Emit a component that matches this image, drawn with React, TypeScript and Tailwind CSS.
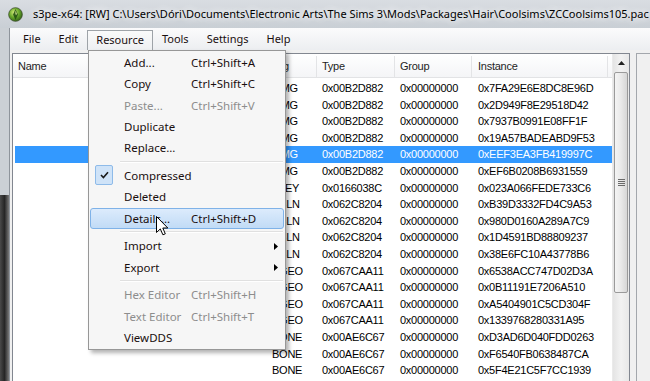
import React from 'react';

// ── Data ──────────────────────────────────────────────────────────────────────

const ROWS: [string, string, string][] = [
  ['_IMG', '0x00B2D882', '0x7FA29E6E8DC8E96D'],
  ['_IMG', '0x00B2D882', '0x2D949F8E29518D42'],
  ['_IMG', '0x00B2D882', '0x7937B0991E08FF1F'],
  ['_IMG', '0x00B2D882', '0x19A57BADEABD9F53'],
  ['_IMG', '0x00B2D882', '0xEEF3EA3FB419997C'],
  ['_IMG', '0x00B2D882', '0xEF6B0208B6931559'],
  ['_KEY', '0x0166038C', '0x023A066FEDE733C6'],
  ['BBLN', '0x062C8204', '0xB39D3332FD4C9A53'],
  ['BBLN', '0x062C8204', '0x980D0160A289A7C9'],
  ['BBLN', '0x062C8204', '0x1D4591BD88809237'],
  ['BBLN', '0x062C8204', '0x38E6FC10A43778B6'],
  ['BGEO', '0x067CAA11', '0x6538ACC747D02D3A'],
  ['BGEO', '0x067CAA11', '0x0B11191E7206A510'],
  ['BGEO', '0x067CAA11', '0xA5404901C5CD304F'],
  ['BGEO', '0x067CAA11', '0x1339768280331A95'],
  ['BONE', '0x00AE6C67', '0xD3AD6D040FDD0263'],
  ['BONE', '0x00AE6C67', '0xF6540FB0638487CA'],
  ['BONE', '0x00AE6C67', '0x5F4E21C5F7CC1939'],
];

const SELECTED = 4;

type MenuEntry =
  | { sep: true }
  | { sep?: false; label: string; keys?: string; disabled?: boolean; checked?: boolean; hot?: boolean; sub?: boolean };

const MENU: MenuEntry[] = [
  { label: 'Add...', keys: 'Ctrl+Shift+A' },
  { label: 'Copy', keys: 'Ctrl+Shift+C' },
  { label: 'Paste...', keys: 'Ctrl+Shift+V', disabled: true },
  { label: 'Duplicate' },
  { label: 'Replace...' },
  { sep: true },
  { label: 'Compressed', checked: true },
  { label: 'Deleted' },
  { label: 'Details...', keys: 'Ctrl+Shift+D', hot: true },
  { sep: true },
  { label: 'Import', sub: true },
  { label: 'Export', sub: true },
  { sep: true },
  { label: 'Hex Editor', keys: 'Ctrl+Shift+H', disabled: true },
  { label: 'Text Editor', keys: 'Ctrl+Shift+T', disabled: true },
  { label: 'ViewDDS' },
];

const UI_FONT = "font-['Noto_Sans','Open_Sans',sans-serif]";
const LIST_FONT = "font-['Liberation_Sans',Arial,sans-serif]";

// ── Small drawings ─────────────────────────────────────────────────────────────

const Plumbob = () => (
  <svg className="shrink-0" width="15" height="15" viewBox="0 0 16 16">
    <defs>
      <radialGradient id="orb" cx="0.4" cy="0.35" r="0.7">
        <stop offset="0" stopColor="#d6ec7a" />
        <stop offset="0.5" stopColor="#6aa92c" />
        <stop offset="1" stopColor="#2d5d14" />
      </radialGradient>
    </defs>
    <circle cx="8" cy="8" r="7.3" fill="url(#orb)" stroke="#3a4a2a" strokeWidth="0.8" />
    <path d="M8 2.2 L10.6 8 L8 13.8 L5.4 8 Z" fill="#1f4a12" opacity="0.85" />
    <path d="M8 3.4 L9.6 8 L8 8 Z" fill="#e9f7a0" />
  </svg>
);

const Cursor = () => (
  <svg width="13" height="20" viewBox="0 0 13 20">
    <path
      d="M0.5 0.5 L0.5 16.5 L4.3 12.9 L6.9 18.8 L9.3 17.8 L6.8 12 L11.8 12 Z"
      fill="#fff"
      stroke="#000"
      strokeWidth="1"
      strokeLinejoin="round"
    />
  </svg>
);

// ── Menu ───────────────────────────────────────────────────────────────────────

const ResourceMenu = () => (
  <div className={`absolute left-[88px] top-[50px] w-[198px] bg-[#f6f6f6] border border-[#979797] pt-[1px] pb-[1px] shadow-[3px_3px_4px_rgba(0,0,0,0.3)] ${UI_FONT} text-[11.5px]`}>
    {MENU.map((m, i) =>
      m.sep ? (
        <div key={i} className="h-[6.5px] flex items-center pl-[31px] pr-[2px]">
          <div className="h-[2px] w-full border-t border-[#e0e0e0] border-b border-b-white" />
        </div>
      ) : (
        <div
          key={i}
          className={`relative h-[21.3px] mx-[1px] flex items-center rounded-[3px] border ${
            m.hot ? 'bg-gradient-to-b from-[#dcebfc] to-[#c1dbf6] border-[#7fb2e8]' : 'border-transparent'
          } ${m.disabled ? 'text-[#8d8d8d]' : 'text-[#1a0f0f]'}`}
        >
          {m.checked && (
            <div className="absolute left-[4px] top-[-1px] w-[18px] h-[20px] rounded-[2px] bg-[#cfe3f8] border border-[#8ebbe9] flex items-center justify-center">
              <svg width="9" height="8" viewBox="0 0 9 8">
                <path d="M1 4 L3.4 6.5 L8 1.2" fill="none" stroke="#1a1a1a" strokeWidth="1.6" />
              </svg>
            </div>
          )}
          <span className="absolute left-[33px] whitespace-nowrap">{m.label}</span>
          {m.keys && <span className="absolute left-[100px] whitespace-nowrap">{m.keys}</span>}
          {m.sub && (
            <svg className="absolute left-[183px]" width="4" height="7" viewBox="0 0 4 7">
              <path d="M0 0 L4 3.5 L0 7 Z" fill="#000" />
            </svg>
          )}
        </div>
      ),
    )}
  </div>
);

// ── List view ──────────────────────────────────────────────────────────────────

const HeaderCell: React.FC<{ w: string; label: string; pad?: string }> = ({ w, label, pad = 'pl-[5px]' }) => (
  <div className={`${w} h-full flex items-center ${pad} border-r border-[#e3e4e6] shrink-0`}>{label}</div>
);

const Scrollbar = () => (
  <div className="w-[17px] shrink-0 flex flex-col bg-gradient-to-r from-[#e4e4e4] via-[#f2f2f2] to-[#e8e8e8] border-l border-[#eaeaea]">
    <div className="h-[17px] flex items-center justify-center">
      <svg width="7" height="4" viewBox="0 0 7 4">
        <path d="M0 4 L3.5 0 L7 4 Z" fill="#222" />
      </svg>
    </div>
    <div className="mt-[1px] mx-[1px] h-[221px] rounded-[2px] border border-[#9a9a9a] bg-gradient-to-r from-[#f4f4f4] via-[#e9e9e9] to-[#d6d6d6] flex flex-col items-center justify-center gap-[1px]">
      {[0, 1, 2, 3].map((i) => (
        <div key={i} className="w-[7px] h-[1px] bg-[#6a6a6a]" />
      ))}
    </div>
  </div>
);

const ListView = () => (
  <div className={`w-[618px] h-[340px] shrink-0 border border-[#828790] bg-white flex ${LIST_FONT} text-[11px] tracking-[-0.25px]`}>
    <div className="flex-1 min-w-0 flex flex-col">
      {/* Header */}
      <div className="h-[24px] shrink-0 flex bg-gradient-to-b from-white to-[#f4f5f7] border-b border-[#e2e3e5] text-[#1e1e1e] pt-[2px]">
        <HeaderCell w="w-[254px]" label="Name" />
        <HeaderCell w="w-[50px]" label="Tag" />
        <HeaderCell w="w-[78px]" label="Type" />
        <HeaderCell w="w-[77px]" label="Group" />
        <HeaderCell w="w-[136px]" label="Instance" pad="pl-[6px]" />
      </div>
      {/* Rows */}
      <div className="pt-[2px] pl-[2px] text-black">
        {ROWS.map(([tag, type, inst], i) => (
          <div
            key={i}
            className={`h-[16.6px] flex items-center ${i === SELECTED ? 'bg-[#3399ff] text-white' : ''}`}
          >
            <div className="w-[252px] shrink-0" />
            <div className="w-[50px] shrink-0 pl-[5px]">{tag}</div>
            <div className="w-[78px] shrink-0 pl-[5px]">{type}</div>
            <div className="w-[77px] shrink-0 pl-[5px]">0x00000000</div>
            <div className="flex-1 pl-[6px]">{inst}</div>
          </div>
        ))}
      </div>
    </div>
    <Scrollbar />
  </div>
);

// ── App ────────────────────────────────────────────────────────────────────────

export default function App() {
  return (
    <div className={`relative w-[650px] h-[381px] overflow-hidden bg-[#f0f0f0] flex flex-col ${UI_FONT}`}>
      {/* Title bar */}
      <div className="h-[28px] shrink-0 flex items-center pl-[8px] bg-gradient-to-b from-[#d9dde2] to-[#c9cfd5] overflow-hidden">
        <Plumbob />
        <span className="ml-[10px] text-[11px] text-black whitespace-nowrap [text-shadow:0_0_7px_#fff,0_0_10px_#fff]">
          s3pe-x64: [RW] C:\Users\Dóri\Documents\Electronic Arts\The Sims 3\Mods\Packages\Hair\Coolsims\ZCCoolsims105.pac
        </span>
      </div>

      <div className="flex flex-1 min-h-0">
        {/* Window frame */}
        <div className="w-[10px] shrink-0 flex flex-col border-r border-[#8e949b]">
          <div className="h-[167px] bg-[#cbd0d5]" />
          <div className="flex-1 bg-gradient-to-r from-[#4a4a4a] via-[#262626] to-[#7a7a7a]" />
        </div>

        <div className="flex-1 min-w-0 flex flex-col">
          {/* Menu bar */}
          <div className="h-[22px] shrink-0 flex items-stretch pl-[4px] bg-gradient-to-b from-[#fbfbfc] to-[#eceef1] text-[11px] text-[#1a0f0f]">
            {['File', 'Edit', 'Resource', 'Tools', 'Settings', 'Help'].map((m) => (
              <div
                key={m}
                className={`px-[8px] flex items-center ${
                  m === 'Resource'
                    ? 'mt-[2px] border border-b-0 border-[#9ea3a8] bg-gradient-to-b from-[#fafafa] to-[#eef0f2]'
                    : 'border border-transparent'
                }`}
              >
                {m}
              </div>
            ))}
          </div>

          {/* Client area */}
          <div className="flex-1 min-h-0 flex items-start pt-[3px] pl-[2px] overflow-hidden">
            <ListView />
            <div className="ml-[6px] w-[30px] h-[340px] shrink-0 border border-[#a3a7ac] bg-[#f0f0f0]" />
          </div>
        </div>
      </div>

      <ResourceMenu />

      <div className="absolute left-[156px] top-[216px]">
        <Cursor />
      </div>
    </div>
  );
}
